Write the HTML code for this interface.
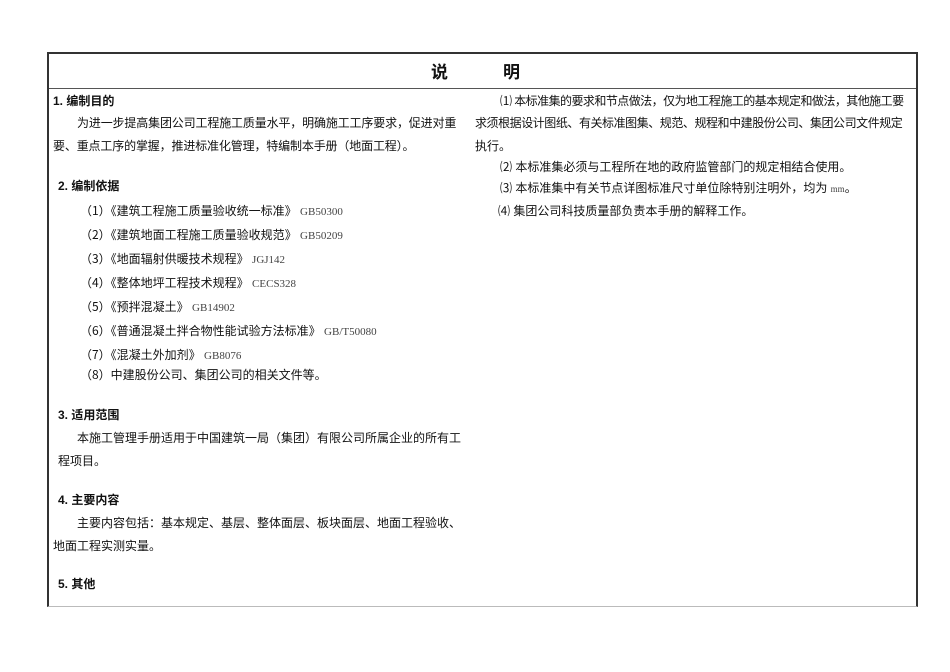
<!DOCTYPE html>
<html><head><meta charset="utf-8"><style>
body{margin:0;width:950px;height:672px;background:#fff;position:relative;font-family:"Liberation Sans","Noto Sans CJK SC",sans-serif;color:#111;overflow:hidden}
.t{position:absolute;font-size:12px;line-height:14px;white-space:nowrap}
.b{font-weight:bold}
.m{font-family:"Liberation Serif","Noto Serif CJK SC",serif;font-size:11px;color:#444}
.c{font-family:"Noto Sans CJK SC",sans-serif}
</style></head><body>
<div style="position:absolute;left:47px;top:52px;width:867px;height:552px;border-top:2px solid #333;border-left:2px solid #333;border-right:2px solid #333;border-bottom:1px solid #bbb"></div>
<div style="position:absolute;left:49px;top:88px;width:867px;height:1px;background:#555"></div>
<div class="t b" style="left:431px;top:63px;font-size:17px;line-height:20px">说</div>
<div class="t b" style="left:503px;top:63px;font-size:17px;line-height:20px">明</div>

<div class="t b" style="left:53px;top:94px">1. 编制目的</div>
<div class="t" style="left:77px;top:116px;letter-spacing:-0.15px">为进一步提高集团公司工程施工质量水平，明确施工工序要求，促进对重</div>
<div class="t" style="left:53px;top:139px;letter-spacing:-0.15px">要、重点工序的掌握，推进标准化管理，特编制本手册（地面工程）。</div>
<div class="t b" style="left:58px;top:179px">2. 编制依据</div>
<div class="t" style="left:80px;top:204px"><span class="c">（1）《</span>建筑工程施工质量验收统一标准<span class="c">》</span> <span class="m">GB50300</span></div>
<div class="t" style="left:80px;top:228px"><span class="c">（2）《</span>建筑地面工程施工质量验收规范<span class="c">》</span> <span class="m">GB50209</span></div>
<div class="t" style="left:80px;top:252px"><span class="c">（3）《</span>地面辐射供暖技术规程<span class="c">》</span> <span class="m">JGJ142</span></div>
<div class="t" style="left:80px;top:276px"><span class="c">（4）《</span>整体地坪工程技术规程<span class="c">》</span> <span class="m">CECS328</span></div>
<div class="t" style="left:80px;top:300px"><span class="c">（5）《</span>预拌混凝土<span class="c">》</span> <span class="m">GB14902</span></div>
<div class="t" style="left:80px;top:324px"><span class="c">（6）《</span>普通混凝土拌合物性能试验方法标准<span class="c">》</span> <span class="m">GB/T50080</span></div>
<div class="t" style="left:80px;top:348px"><span class="c">（7）《</span>混凝土外加剂<span class="c">》</span> <span class="m">GB8076</span></div>
<div class="t" style="left:80px;top:368px"><span class="c">（8）</span>中建股份公司、集团公司的相关文件等。</div>
<div class="t b" style="left:58px;top:408px">3. 适用范围</div>
<div class="t" style="left:77px;top:431px">本施工管理手册适用于中国建筑一局（集团）有限公司所属企业的所有工</div>
<div class="t" style="left:58px;top:454px">程项目。</div>
<div class="t b" style="left:58px;top:493px">4. 主要内容</div>
<div class="t" style="left:77px;top:516px">主要内容包括：基本规定、基层、整体面层、板块面层、地面工程验收、</div>
<div class="t" style="left:53px;top:539px">地面工程实测实量。</div>
<div class="t b" style="left:58px;top:577px">5. 其他</div>

<div class="t" style="left:500px;top:94px;letter-spacing:-0.55px">⑴ 本标准集的要求和节点做法，仅为地工程施工的基本规定和做法，其他施工要</div>
<div class="t" style="left:475px;top:116px;letter-spacing:-0.45px">求须根据设计图纸、有关标准图集、规范、规程和中建股份公司、集团公司文件规定</div>
<div class="t" style="left:475px;top:139px">执行。</div>
<div class="t" style="left:500px;top:160px">⑵ 本标准集必须与工程所在地的政府监管部门的规定相结合使用。</div>
<div class="t" style="left:500px;top:181px">⑶ 本标准集中有关节点详图标准尺寸单位除特别注明外，均为 <span class="m" style="font-size:9px">mm</span>。</div>
<div class="t" style="left:498px;top:204px">⑷ 集团公司科技质量部负责本手册的解释工作。</div>
</body></html>
